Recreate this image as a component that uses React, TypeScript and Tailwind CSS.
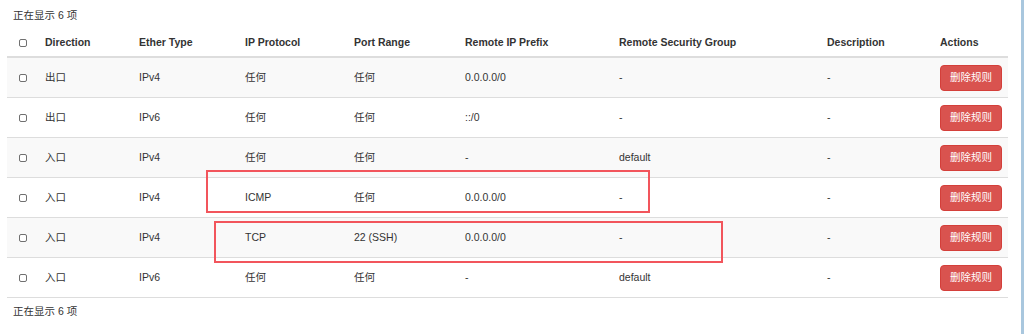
import React from "react";

const cols = "grid grid-cols-[30px_94px_106px_109px_111px_154px_208px_113px_76px]";

const rows = [
  ["出口", "IPv4", "任何", "任何", "0.0.0.0/0", "-", "-"],
  ["出口", "IPv6", "任何", "任何", "::/0", "-", "-"],
  ["入口", "IPv4", "任何", "任何", "-", "default", "-"],
  ["入口", "IPv4", "ICMP", "任何", "0.0.0.0/0", "-", "-"],
  ["入口", "IPv4", "TCP", "22 (SSH)", "0.0.0.0/0", "-", "-"],
  ["入口", "IPv6", "任何", "任何", "-", "default", "-"],
];

const headers = [
  "Direction",
  "Ether Type",
  "IP Protocol",
  "Port Range",
  "Remote IP Prefix",
  "Remote Security Group",
  "Description",
  "Actions",
];

function Box() {
  return <div className="w-[8px] h-[8px] border border-[#707070] rounded-[2px] bg-white" />;
}

export default function App() {
  return (
    <div
      className="flex w-[1024px] h-[334px] bg-white text-[#333] text-[10.5px] overflow-hidden"
      style={{ fontFamily: '"Liberation Sans", Arial, "Noto Sans CJK SC", sans-serif' }}
    >
      <div className="relative flex-1 pl-[7px] pr-[13px]">
        <div className="pl-[6px] pt-[8px] h-[30px] leading-[14px]">正在显示 6 项</div>
        <div className={`${cols} h-[28px] items-center border-b-2 border-[#ddd] font-bold`}>
          <div className="pl-[12px]">
            <Box />
          </div>
          {headers.map((h) => (
            <div key={h} className="pl-[8px]">
              {h}
            </div>
          ))}
        </div>
        {rows.map((r, i) => (
          <div
            key={i}
            className={`${cols} h-[40px] items-center border-b border-[#ddd] ${i % 2 === 0 ? "bg-[#f9f9f9]" : "bg-white"}`}
          >
            <div className="pl-[12px]">
              <Box />
            </div>
            {r.map((c, j) => (
              <div key={j} className="pl-[8px]">
                {c}
              </div>
            ))}
            <div className="pl-[8px]">
              <button className="h-[26px] px-[9px] rounded-[4px] bg-[#d9534f] border border-[#d43f3a] text-white text-[10.5px] leading-none">
                删除规则
              </button>
            </div>
          </div>
        ))}
        <div className="pl-[6px] pt-[6px] leading-[14px]">正在显示 6 项</div>

        <div className="absolute left-[206px] top-[170px] w-[444px] h-[43px] border-2 border-[#f2555c]" />
        <div className="absolute left-[214px] top-[221px] w-[509px] h-[42px] border-2 border-[#f2555c]" />
      </div>
      <div className="w-[3px] h-full bg-[#a9c7de]" />
    </div>
  );
}
